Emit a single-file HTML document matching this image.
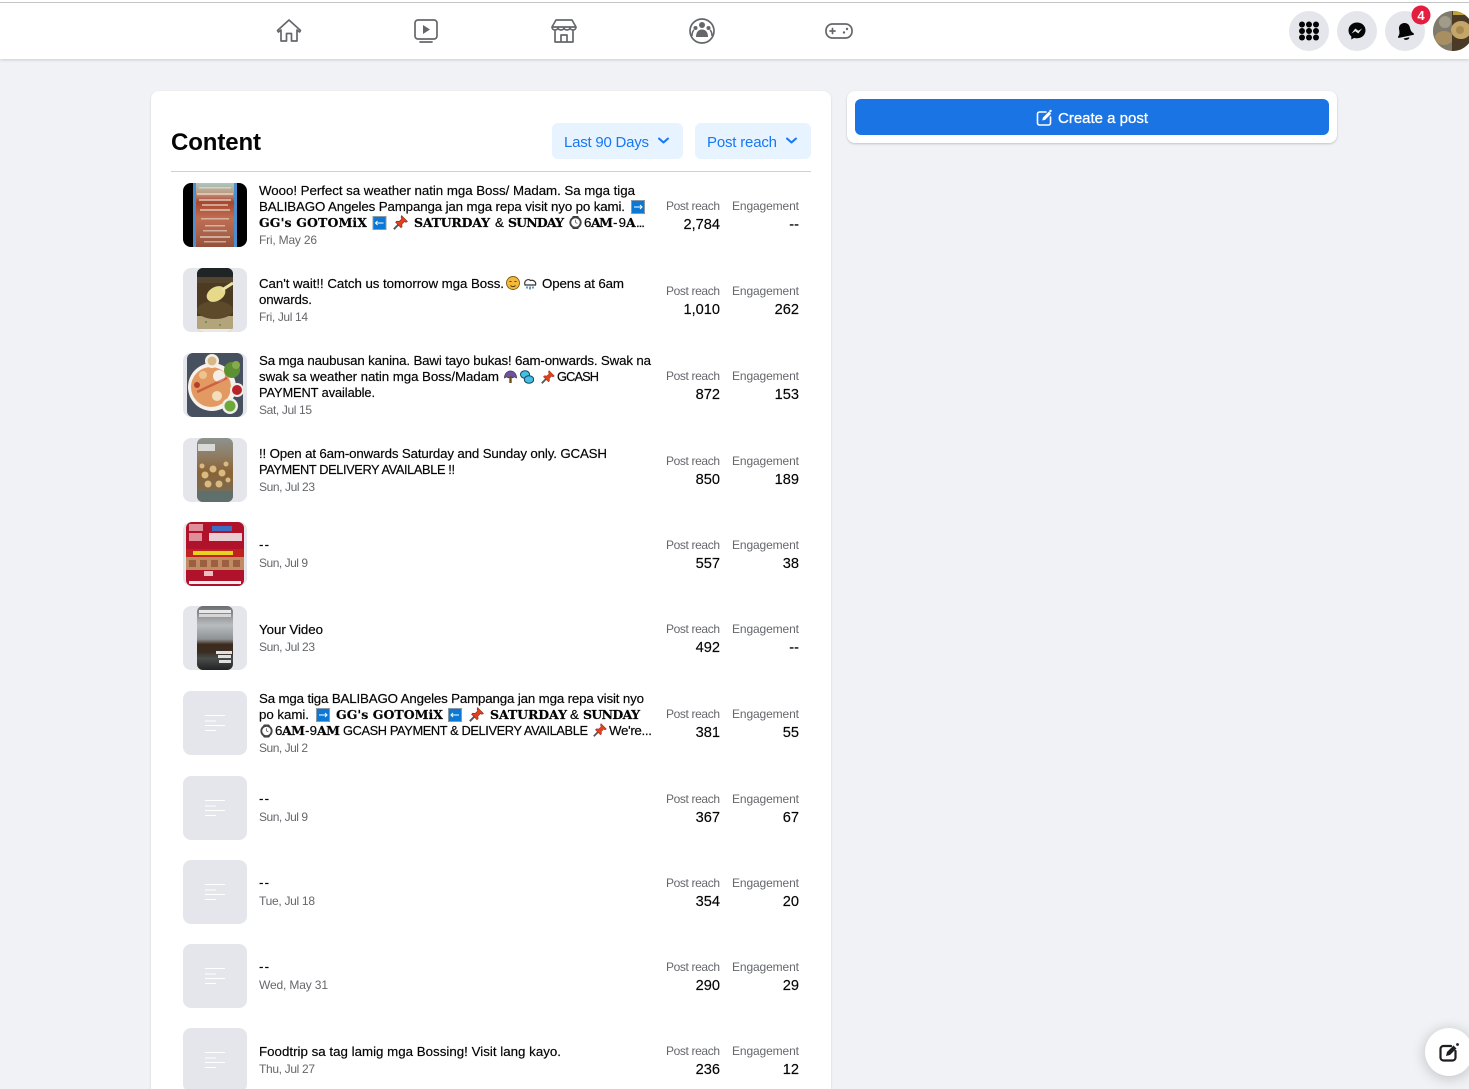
<!DOCTYPE html>
<html lang="en"><head><meta charset="utf-8"><title>Content</title>
<style>
html,body{margin:0;padding:0;width:1469px;height:1089px;overflow:hidden;background:#f0f2f5;font-family:"Liberation Sans",sans-serif}
#page{position:relative;width:1469px;height:1089px;overflow:hidden}
.abs{position:absolute}
#hdr{left:0;top:0;width:1469px;height:59px;background:#fff;box-shadow:0 1px 3px rgba(0,0,0,.16)}
#line{left:0;top:2px;width:1469px;height:1px;background:#c4c4c4}
#card{left:151px;top:91px;width:680px;height:998px;background:#fff;border-radius:8px 8px 0 0;box-shadow:0 1px 2px rgba(0,0,0,.15)}
#side{left:847px;top:91px;width:490px;height:52px;background:#fff;border-radius:8px;box-shadow:0 1px 2px rgba(0,0,0,.2)}
#btn{left:855px;top:99px;width:474px;height:36px;background:#1b74e4;border-radius:6px}
.dd{top:123px;height:36px;background:#e7f3ff;border-radius:6px}
#dv{left:171px;top:171px;width:640px;height:1px;background:#ced0d4}
#fab{left:1425px;top:1028px;width:48px;height:48px;border-radius:50%;background:#fff;box-shadow:0 2px 14px rgba(0,0,0,.22)}
svg.o{position:absolute;left:0;top:0}
.t{font:13.3px "Liberation Sans",sans-serif;fill:#050505;stroke:#050505;stroke-width:.18}
.u{font-size:12.8px}
.y{font:bold 12.5px "DejaVu Serif",serif;fill:#050505;stroke:#050505;stroke-width:.2}
.d{font:12px "Liberation Sans",sans-serif;fill:#65676b}
.l{font:12px "Liberation Sans",sans-serif;fill:#65676b}
.v{font:14.6px "Liberation Sans",sans-serif;fill:#050505;stroke:#050505;stroke-width:.15;text-anchor:end}
.n{fill:none;stroke:#65676b;stroke-width:1.7;stroke-linejoin:round;stroke-linecap:round}
.c{fill:#e4e6eb}
</style></head>
<body>
<div id="page">
<div class="abs" id="hdr"></div><div class="abs" id="line"></div>
<div class="abs" id="card"></div><div class="abs" id="side"></div><div class="abs" id="btn"></div>
<div class="abs dd" style="left:552px;width:131px"></div><div class="abs dd" style="left:695px;width:116px"></div>
<div class="abs" id="dv"></div><div class="abs" id="fab"></div>
<svg class="o" width="1469" height="1089" viewBox="0 0 1469 1089" xmlns="http://www.w3.org/2000/svg">
<defs>
<symbol id="ar" viewBox="0 0 14 14"><rect x=".5" y=".5" width="13" height="13" fill="#0a78d4" stroke="#8c9aa5"/><path d="M3 7h8M9 5l2 2-2 2" stroke="#fff" fill="none" stroke-width="1"/></symbol>
<symbol id="al" viewBox="0 0 14 14"><rect x=".5" y=".5" width="13" height="13" fill="#0a78d4" stroke="#8c9aa5"/><path d="M3 7h8M5 5L3 7l2 2" stroke="#fff" fill="none" stroke-width="1"/></symbol>
<symbol id="pin" viewBox="0 0 14 14"><path d="M.8 13.200l4.700-4.700" stroke="#555" stroke-width="1.800"/><path d="M8 .5l5.500 5.500-1.400.8-1.500-.6-2.300 2.400.2 2.300-1 1L2.400 6.800l1-1 2.300.2 2.400-2.300L7.500 2z" fill="#e2401f" stroke="#7d2412" stroke-width=".5"/></symbol>
<symbol id="wt" viewBox="0 0 14 14"><rect x="3.500" y="0" width="7" height="14" rx="1.500" fill="#333"/><circle cx="7" cy="7" r="5.600" fill="#fff" stroke="#444" stroke-width="2"/><path d="M7 7V4M7 7l2 1" stroke="#555" stroke-width=".8"/></symbol>
<symbol id="um" viewBox="0 0 14 14"><path d="M.5 8C.5 3 4 .5 7 .5s6.500 2.500 6.500 7.500l-2.200-1.200-2.100 1.200-2.200-1.200-2.200 1.200-2.100-1.200z" fill="#6f529f" stroke="#30224a" stroke-width=".7"/><path d="M7 6v7.500" stroke="#6e4f20" stroke-width="2.600"/></symbol>
<symbol id="dr" viewBox="0 0 14 14"><ellipse cx="5" cy="4.500" rx="4.500" ry="3.800" fill="#44bfe6" stroke="#164a5e" stroke-width="1"/><ellipse cx="9" cy="9.500" rx="4.700" ry="3.800" fill="#44bfe6" stroke="#164a5e" stroke-width="1"/></symbol>
<symbol id="ph" viewBox="0 0 64 64"><rect width="64" height="64" rx="8" fill="#e4e6eb"/><path d="M22 24.500h20M22 30h11M22 34.500h20M22 39.500h11" stroke="#fff" stroke-width="1"/></symbol>
<clipPath id="c1"><rect x="183" y="183" width="64" height="64" rx="8"/></clipPath>
<clipPath id="c2"><rect x="197" y="268" width="36" height="64" rx="6"/></clipPath>
<clipPath id="c3b"><rect x="187" y="353" width="56" height="64" rx="6"/></clipPath>
<clipPath id="c4"><rect x="197" y="438" width="36" height="64" rx="6"/></clipPath>
<clipPath id="c5"><rect x="186" y="522" width="58" height="64" rx="6"/></clipPath>
<clipPath id="c6"><rect x="197" y="606" width="36" height="64" rx="6"/></clipPath>
<clipPath id="av"><circle cx="1453" cy="31" r="20"/></clipPath>
<linearGradient id="g1" x1="0" y1="0" x2="0" y2="1"><stop offset="0" stop-color="#a9c8c0"/><stop offset=".16" stop-color="#c09a80"/><stop offset=".3" stop-color="#a9452f"/><stop offset=".55" stop-color="#bf6e52"/><stop offset=".8" stop-color="#a9624a"/><stop offset="1" stop-color="#93503a"/></linearGradient>
<linearGradient id="g6" x1="0" y1="0" x2="0" y2="1"><stop offset="0" stop-color="#6b6e70"/><stop offset=".3" stop-color="#b8bcbe"/><stop offset=".52" stop-color="#8d9193"/><stop offset=".6" stop-color="#3d2a1c"/><stop offset=".72" stop-color="#3a2d22"/><stop offset=".82" stop-color="#4a4c4b"/><stop offset="1" stop-color="#222"/></linearGradient>
<linearGradient id="g4" x1="0" y1="0" x2="0" y2="1"><stop offset="0" stop-color="#8c948e"/><stop offset=".3" stop-color="#8f7a5f"/><stop offset=".55" stop-color="#8a6236"/><stop offset=".8" stop-color="#7c6a50"/><stop offset="1" stop-color="#6d7a78"/></linearGradient>
</defs>

<!-- nav icons -->
<path class="n" d="M289 20l-11.500 10.500 1 1.500 2.500-2v11h5.500v-7.500h5v7.500H297V30l2.500 2 1-1.500z"/>
<rect class="n" x="415" y="20" width="22" height="19" rx="3"/><path d="M423 25v9l7-4.500z" fill="#65676b"/><path class="n" d="M420 42h12"/>
<path class="n" d="M556 20h16l4 7c0 2-1.500 3-3 3s-3-1-3-2.500c0 1.500-1.500 2.500-3 2.500s-3-1-3-2.500c0 1.500-1.500 2.500-3 2.500s-3-1-3-2.500c0 1.500-1.500 2.500-3 2.500s-3-1-3-3zM553 27h22M555 31v11h18V31M561 42v-7h6v7"/>
<circle class="n" cx="702" cy="31" r="12"/><circle cx="702" cy="25" r="3" fill="#65676b"/><circle cx="695.500" cy="28" r="2" fill="#65676b"/><circle cx="708.500" cy="28" r="2" fill="#65676b"/><path d="M696 37c0-5 2.500-7.500 6-7.500s6 2.500 6 7.500z" fill="#65676b"/><path d="M692 36c0-3 .8-5 2-6M712 36c0-3-.8-5-2-6" stroke="#65676b" stroke-width="1.500" fill="none"/>
<rect class="n" x="826" y="24" width="26" height="14" rx="6.500"/><path class="n" d="M830 31h5M832.500 28.500v5"/><circle cx="844" cy="32.500" r="1.200" fill="#65676b"/><circle cx="847" cy="29" r="1.200" fill="#65676b"/>

<!-- right header -->
<circle class="c" cx="1309" cy="31" r="20"/><circle class="c" cx="1357" cy="31" r="20"/><circle class="c" cx="1405" cy="31" r="20"/>
<g fill="#050505"><circle cx="1302" cy="24.500" r="3"/><circle cx="1309" cy="24.500" r="3"/><circle cx="1316" cy="24.500" r="3"/><circle cx="1302" cy="31" r="3"/><circle cx="1309" cy="31" r="3"/><circle cx="1316" cy="31" r="3"/><circle cx="1302" cy="37.500" r="3"/><circle cx="1309" cy="37.500" r="3"/><circle cx="1316" cy="37.500" r="3"/></g>
<path d="M1357 22.500c-5 0-8.500 3.500-8.500 8 0 2.500 1 4.500 2.800 5.900V39.500l2.800-1.600c.9.300 1.900.4 2.900.4 5 0 8.500-3.500 8.500-8s-3.500-7.800-8.500-7.800z" fill="#050505"/><path d="M1351.500 33.500l3.800-5 3 2.300 3.800-2.300-3.800 5-3-2.300z" fill="#e4e6eb"/>
<g transform="rotate(-12 1405 31)"><path d="M1405 23c-3.500 0-5.500 2.500-5.500 5.500 0 3-.5 5-2.500 6.500v1.500h16V35c-2-1.500-2.500-3.500-2.500-6.500 0-3-2-5.500-5.500-5.500z" fill="#050505"/><path d="M1402 38c.5 1.500 1.500 2 3 2s2.500-.5 3-2z" fill="#050505"/></g>
<circle cx="1421" cy="15" r="9.500" fill="#e41e3f"/><text x="1421" y="20" font-family="Liberation Sans" font-weight="bold" font-size="13" fill="#fff" text-anchor="middle">4</text>
<g clip-path="url(#av)"><rect x="1433" y="11" width="40" height="40" fill="#8f7d5d"/><path d="M1433 11h20v40h-20z" fill="#7f7a6c"/><ellipse cx="1444" cy="38" rx="9" ry="7" fill="#a88f62"/><circle cx="1445" cy="22" r="6" fill="#a19c8a"/><rect x="1452" y="11" width="17" height="40" fill="#4a3a26"/><ellipse cx="1461" cy="30" rx="10" ry="9" fill="#c4a56a"/><rect x="1453" y="11" width="16" height="4" fill="#bfa33f"/><circle cx="1460" cy="30" r="4" fill="#a98a4e"/></g>

<!-- header of content -->
<text x="171" y="150" font-family="Liberation Sans" font-weight="bold" font-size="24" fill="#050505" textLength="90">Content</text>
<text x="564" y="147" font-family="Liberation Sans" font-size="15" fill="#1877f2" textLength="85">Last 90 Days</text>
<path d="M659 138.500l4.500 4 4.500-4" fill="none" stroke="#1877f2" stroke-width="2" stroke-linecap="round" stroke-linejoin="round"/>
<text x="707" y="147" font-family="Liberation Sans" font-size="15" fill="#1877f2" textLength="70">Post reach</text>
<path d="M787 138.500l4.500 4 4.500-4" fill="none" stroke="#1877f2" stroke-width="2" stroke-linecap="round" stroke-linejoin="round"/>

<!-- create post -->
<path d="M1046 112h-6.500a2 2 0 0 0-2 2v9a2 2 0 0 0 2 2h9a2 2 0 0 0 2-2v-6" fill="none" stroke="#fff" stroke-width="1.600" stroke-linecap="round"/><path d="M1043 117.500l-.8 3 3-.8 6-6-2.200-2.200z" fill="#fff"/><circle cx="1050.500" cy="111" r="1.200" fill="#fff"/>
<text x="1058" y="123" font-family="Liberation Sans" font-size="15" fill="#fff" stroke="#fff" stroke-width=".3" textLength="90">Create a post</text>

<!-- fab icon -->
<path d="M1451 1046h-7.500a3 3 0 0 0-3 3v8.500a3 3 0 0 0 3 3h9a3 3 0 0 0 3-3V1051" fill="none" stroke="#1c1e21" stroke-width="2.200" stroke-linecap="round"/><path d="M1447 1052l-1 4 4-1 6.500-6.500-3-3z" fill="#1c1e21"/><circle cx="1457.500" cy="1044.500" r="1.400" fill="#1c1e21"/>

<!-- thumb 1 -->
<g clip-path="url(#c1)"><rect x="183" y="183" width="64" height="64" fill="#000"/><rect x="193" y="183" width="44" height="64" fill="#4c8fcf"/><rect x="196" y="183" width="38" height="64" fill="url(#g1)"/>
<g fill="#f2ece2" opacity=".55"><rect x="199" y="187" width="32" height="1.500"/><rect x="197" y="193" width="36" height="2"/><rect x="199" y="199" width="32" height="2"/><rect x="202" y="204" width="26" height="2"/><rect x="200" y="209" width="30" height="2"/><rect x="201" y="218" width="28" height="1.500"/><rect x="205" y="225" width="20" height="1.500"/><rect x="203" y="230" width="24" height="1.500"/><rect x="200" y="236" width="30" height="2"/><rect x="204" y="241" width="22" height="1.500"/></g></g>
<!-- thumb 2 -->
<rect x="183" y="268" width="64" height="64" rx="8" fill="#e4e6eb"/>
<g clip-path="url(#c2)"><rect x="197" y="268" width="36" height="64" fill="#4d3a22"/><rect x="197" y="268" width="36" height="9" fill="#1f2425"/><rect x="197" y="277" width="36" height="6" fill="#55442f"/><rect x="197" y="316" width="36" height="16" fill="#b3a47c"/><ellipse cx="215" cy="310" rx="18" ry="9" fill="#5d4a2a"/><ellipse cx="216" cy="294" rx="10" ry="7" fill="#e6d98a" transform="rotate(-30 216 294)"/><path d="M222 290l11-7" stroke="#e8e3a6" stroke-width="3"/><circle cx="206" cy="322" r="1" fill="#5d8f35"/><circle cx="220" cy="325" r="1" fill="#5d8f35"/><rect x="197" y="329" width="36" height="3" fill="#e8e8e8"/></g>
<!-- thumb 3 -->
<rect x="183" y="353" width="64" height="64" rx="8" fill="#e4e6eb"/>
<g clip-path="url(#c3b)"><rect x="187" y="353" width="56" height="64" fill="#46505e"/><circle cx="212" cy="387" r="24" fill="#f6f1ea"/><circle cx="211" cy="387" r="20" fill="#e39a62"/><circle cx="219" cy="376" r="6" fill="#f3efe6"/><circle cx="217" cy="396" r="5" fill="#f0dfba"/><circle cx="203" cy="375" r="4" fill="#edc48f"/><circle cx="197" cy="385" r="3" fill="#b4402c"/><circle cx="212" cy="361" r="7" fill="#f4efe2"/><circle cx="212" cy="361" r="4.500" fill="#d6b888"/><circle cx="232" cy="370" r="8" fill="#5d8f35"/><circle cx="236" cy="365" r="4" fill="#87ab4a"/><circle cx="237" cy="390" r="7" fill="#f2eee8"/><circle cx="237" cy="390" r="5" fill="#b8232b"/><circle cx="230" cy="406" r="8" fill="#f2eee8"/><circle cx="230" cy="406" r="5.500" fill="#6da83e"/><path d="M197 392l30-14" stroke="#bf3a2c" stroke-width="2.500" opacity=".6"/></g>
<!-- thumb 4 -->
<rect x="183" y="438" width="64" height="64" rx="8" fill="#e4e6eb"/>
<g clip-path="url(#c4)"><rect x="197" y="438" width="36" height="64" fill="url(#g4)"/><rect x="198" y="444" width="17" height="7" fill="#d8d8d4"/><g fill="#d9bb80"><circle cx="205" cy="475" r="3.500"/><circle cx="213" cy="469" r="3.500"/><circle cx="222" cy="473" r="3.500"/><circle cx="208" cy="484" r="3.500"/><circle cx="219" cy="484" r="3.500"/><circle cx="228" cy="480" r="2.500"/><circle cx="202" cy="466" r="2.500"/><circle cx="226" cy="464" r="2.500"/></g><rect x="197" y="491" width="36" height="11" fill="#5f6f6c"/></g>
<!-- thumb 5 -->
<rect x="183" y="522" width="64" height="64" rx="8" fill="#e4e6eb"/>
<g clip-path="url(#c5)"><rect x="186" y="522" width="58" height="64" fill="#b0122b"/><rect x="209" y="533" width="33" height="8" fill="#f3eeee" opacity=".85"/><rect x="212" y="526" width="20" height="5" fill="#3d6ec4"/><g fill="#dd8e98"><rect x="189" y="524" width="14" height="7"/><rect x="189" y="533" width="13" height="8"/></g><rect x="186" y="549" width="58" height="8" fill="#c0231f"/><rect x="193" y="551" width="40" height="4" fill="#e6d41f"/><rect x="186" y="557" width="58" height="13" fill="#c18c64"/><g fill="#9c6040"><rect x="189" y="560" width="7" height="7"/><rect x="200" y="560" width="7" height="7"/><rect x="211" y="560" width="7" height="7"/><rect x="222" y="560" width="7" height="7"/><rect x="233" y="560" width="7" height="7"/></g><rect x="204" y="571" width="9" height="5" fill="#e8c0c0"/><rect x="189" y="581" width="52" height="3" fill="#eceef2"/></g>
<!-- thumb 6 -->
<rect x="183" y="606" width="64" height="64" rx="8" fill="#e4e6eb"/>
<g clip-path="url(#c6)"><rect x="197" y="606" width="36" height="64" fill="url(#g6)"/><rect x="199" y="610" width="32" height="3" fill="#e8e8e8"/><rect x="199" y="614" width="32" height="3" fill="#d6d6d6"/><rect x="216" y="651" width="16" height="3" fill="#e0e0e0"/><rect x="218" y="655" width="13" height="3" fill="#e0e0e0"/><rect x="219" y="660" width="12" height="3" fill="#e0e0e0"/></g>
<use href="#ph" x="183" y="691" width="64" height="64"/>
<use href="#ph" x="183" y="776" width="64" height="64"/>
<use href="#ph" x="183" y="860" width="64" height="64"/>
<use href="#ph" x="183" y="944" width="64" height="64"/>
<use href="#ph" x="183" y="1028" width="64" height="64"/>

<!-- row 1 -->
<text class="t" x="259" y="195" textLength="376">Wooo! Perfect sa weather natin mga Boss/ Madam. Sa mga tiga</text>
<text class="t" x="259" y="211" textLength="366">BALIBAGO Angeles Pampanga jan mga repa visit nyo po kami.</text>
<use href="#ar" x="631" y="200" width="14" height="14"/>
<text class="y" x="259" y="227" textLength="108">GG's GOTOMiX</text>
<use href="#al" x="372" y="216" width="15" height="14"/><use href="#pin" x="393" y="215" width="15" height="15"/>
<text class="y" x="414" y="227" textLength="76">SATURDAY</text><text class="t" x="495" y="227">&amp;</text><text class="y" x="508" y="227" textLength="56">SUNDAY</text>
<use href="#wt" x="569" y="216" width="13" height="13"/>
<text class="t" x="584" y="227">6</text><text class="y" x="591" y="227" textLength="22">AM</text><text class="t" x="613" y="227" textLength="13">-9</text><text class="y" x="626" y="227" textLength="10">A</text><text class="t" x="636" y="227" textLength="9">...</text>
<text class="d" x="259" y="244" textLength="58">Fri, May 26</text>
<!-- row 2 -->
<text class="t" x="259" y="288" textLength="245">Can't wait!! Catch us tomorrow mga Boss.</text>
<circle cx="513" cy="283" r="6.500" fill="#f2b93a" stroke="#7d5c18" stroke-width=".9"/><path d="M509.500 281.500h2M514.500 281.500h2M510.500 285.500c1.500 1.500 3.500 1.500 5 0" stroke="#5b400c" stroke-width="1" fill="none"/>
<path d="M525 285c-1.500-4 3-7 5.500-4.500 3-1 6 1.500 5 4.500z" fill="#fff" stroke="#333" stroke-width="1.200"/><path d="M527 286.500v2M530 286.500v3M533 286.500v2" stroke="#256f9c" stroke-width="1.400"/>
<text class="t" x="542" y="288" textLength="82">Opens at 6am</text>
<text class="t" x="259" y="304" textLength="53">onwards.</text>
<text class="d" x="259" y="321" textLength="49">Fri, Jul 14</text>
<!-- row 3 -->
<text class="t" x="259" y="365" textLength="392">Sa mga naubusan kanina. Bawi tayo bukas! 6am-onwards. Swak na</text>
<text class="t" x="259" y="381" textLength="240">swak sa weather natin mga Boss/Madam</text>
<use href="#um" x="504" y="370" width="13" height="14"/><use href="#dr" x="520" y="370" width="14" height="14"/><use href="#pin" x="541" y="370" width="14" height="14"/>
<text class="t u" x="557" y="381" textLength="42">GCASH</text>
<text class="t u" x="259" y="397" textLength="116">PAYMENT available.</text>
<text class="d" x="259" y="414" textLength="53">Sat, Jul 15</text>
<!-- row 4 -->
<text class="t" x="259" y="458" textLength="348">!! Open at 6am-onwards Saturday and Sunday only. GCASH</text>
<text class="t u" x="259" y="474" textLength="196">PAYMENT DELIVERY AVAILABLE !!</text>
<text class="d" x="259" y="491" textLength="56">Sun, Jul 23</text>
<!-- row 5 -->
<text class="t" x="259" y="549" textLength="10">--</text><text class="d" x="259" y="567" textLength="49">Sun, Jul 9</text>
<!-- row 6 -->
<text class="t" x="259" y="634" textLength="64">Your Video</text><text class="d" x="259" y="651" textLength="56">Sun, Jul 23</text>
<!-- row 7 -->
<text class="t" x="259" y="703" textLength="385">Sa mga tiga BALIBAGO Angeles Pampanga jan mga repa visit nyo</text>
<text class="t" x="259" y="719" textLength="50">po kami.</text><use href="#ar" x="316" y="708" width="14" height="14"/>
<text class="y" x="336" y="719" textLength="107">GG's GOTOMiX</text><use href="#al" x="448" y="708" width="14" height="14"/><use href="#pin" x="469" y="707" width="15" height="15"/>
<text class="y" x="490" y="719" textLength="77">SATURDAY</text><text class="t" x="570" y="719">&amp;</text><text class="y" x="583" y="719" textLength="57">SUNDAY</text>
<use href="#wt" x="260" y="724" width="13" height="14"/>
<text class="t" x="275" y="735">6</text><text class="y" x="282" y="735" textLength="23">AM</text><text class="t" x="305" y="735" textLength="12">-9</text><text class="y" x="317" y="735" textLength="23">AM</text>
<text class="t u" x="343" y="735" textLength="245">GCASH PAYMENT &amp; DELIVERY AVAILABLE</text><use href="#pin" x="593" y="723" width="14" height="14"/>
<text class="t" x="609" y="735" textLength="43">We're...</text>
<text class="d" x="259" y="752" textLength="49">Sun, Jul 2</text>
<!-- rows 8-11 -->
<text class="t" x="259" y="803" textLength="10">--</text><text class="d" x="259" y="821" textLength="49">Sun, Jul 9</text>
<text class="t" x="259" y="887" textLength="10">--</text><text class="d" x="259" y="905" textLength="56">Tue, Jul 18</text>
<text class="t" x="259" y="971" textLength="10">--</text><text class="d" x="259" y="989" textLength="69">Wed, May 31</text>
<text class="t" x="259" y="1056" textLength="302">Foodtrip sa tag lamig mga Bossing! Visit lang kayo.</text><text class="d" x="259" y="1073" textLength="56">Thu, Jul 27</text>

<!-- metrics -->
<text class="l" x="666" y="210" textLength="54">Post reach</text><text class="l" x="732" y="210" textLength="67">Engagement</text><text class="v" x="720" y="229">2,784</text><text class="v" x="799" y="229">--</text>
<text class="l" x="666" y="295" textLength="54">Post reach</text><text class="l" x="732" y="295" textLength="67">Engagement</text><text class="v" x="720" y="314">1,010</text><text class="v" x="799" y="314">262</text>
<text class="l" x="666" y="380" textLength="54">Post reach</text><text class="l" x="732" y="380" textLength="67">Engagement</text><text class="v" x="720" y="399">872</text><text class="v" x="799" y="399">153</text>
<text class="l" x="666" y="465" textLength="54">Post reach</text><text class="l" x="732" y="465" textLength="67">Engagement</text><text class="v" x="720" y="484">850</text><text class="v" x="799" y="484">189</text>
<text class="l" x="666" y="549" textLength="54">Post reach</text><text class="l" x="732" y="549" textLength="67">Engagement</text><text class="v" x="720" y="568">557</text><text class="v" x="799" y="568">38</text>
<text class="l" x="666" y="633" textLength="54">Post reach</text><text class="l" x="732" y="633" textLength="67">Engagement</text><text class="v" x="720" y="652">492</text><text class="v" x="799" y="652">--</text>
<text class="l" x="666" y="718" textLength="54">Post reach</text><text class="l" x="732" y="718" textLength="67">Engagement</text><text class="v" x="720" y="737">381</text><text class="v" x="799" y="737">55</text>
<text class="l" x="666" y="803" textLength="54">Post reach</text><text class="l" x="732" y="803" textLength="67">Engagement</text><text class="v" x="720" y="822">367</text><text class="v" x="799" y="822">67</text>
<text class="l" x="666" y="887" textLength="54">Post reach</text><text class="l" x="732" y="887" textLength="67">Engagement</text><text class="v" x="720" y="906">354</text><text class="v" x="799" y="906">20</text>
<text class="l" x="666" y="971" textLength="54">Post reach</text><text class="l" x="732" y="971" textLength="67">Engagement</text><text class="v" x="720" y="990">290</text><text class="v" x="799" y="990">29</text>
<text class="l" x="666" y="1055" textLength="54">Post reach</text><text class="l" x="732" y="1055" textLength="67">Engagement</text><text class="v" x="720" y="1074">236</text><text class="v" x="799" y="1074">12</text>
</svg>
</div>
</body></html>
